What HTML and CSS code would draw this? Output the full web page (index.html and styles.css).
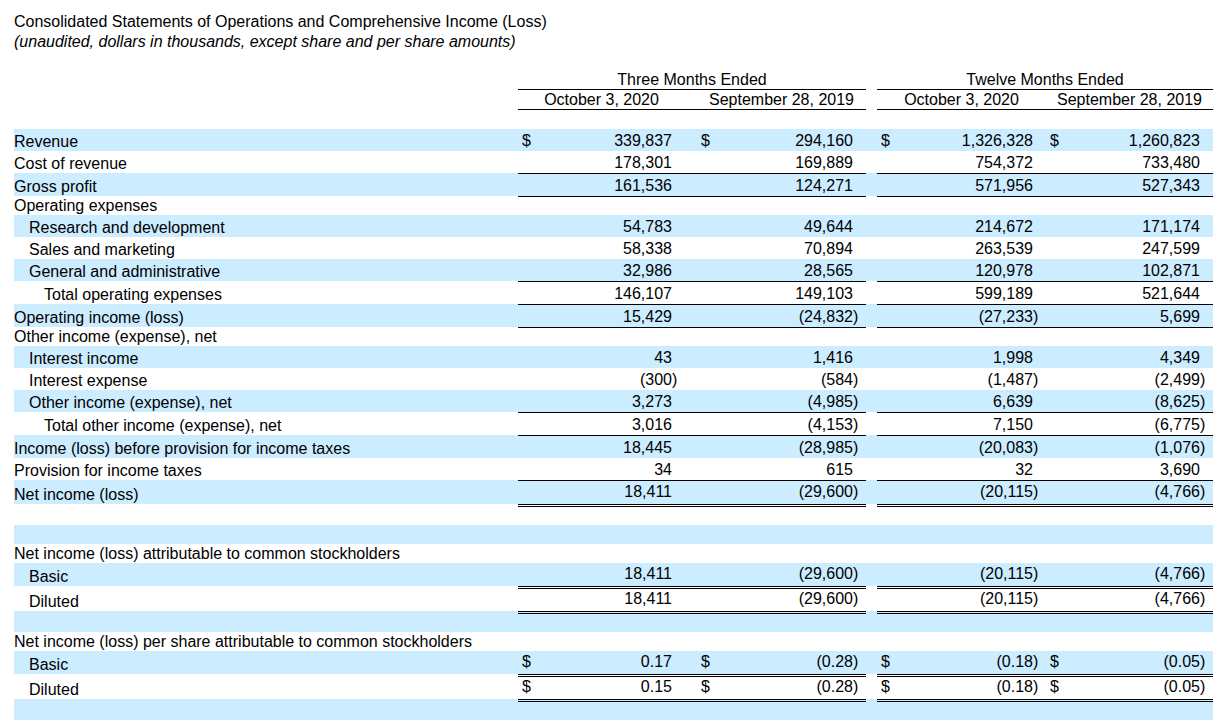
FILE: index.html
```html
<!DOCTYPE html>
<html lang="en">
<head>
<meta charset="utf-8">
<title>Consolidated Statements of Operations and Comprehensive Income (Loss)</title>
<link rel="stylesheet" href="styles.css">
</head>
<body>
<div class="page">
  <div class="title">
    <div>Consolidated Statements of Operations and Comprehensive Income (Loss)</div>
    <div class="sub">(unaudited, dollars in thousands, except share and per share amounts)</div>
  </div>

  <div class="sheet">
    <div class="row head1">
      <div class="lab"></div>
      <div class="grp g-a">Three Months Ended</div>
      <div class="gap"></div>
      <div class="grp g-b">Twelve Months Ended</div>
    </div>
    <div class="row head2">
      <div class="lab"></div>
      <div class="hd">October 3, 2020</div>
      <div class="sp"></div>
      <div class="hd">September 28, 2019</div>
      <div class="gap"></div>
      <div class="hd">October 3, 2020</div>
      <div class="hd">September 28, 2019</div>
    </div>

    <div class="body">
      <div class="row blue h22">
        <div class="lab">Revenue</div>
        <div class="num"><span>$</span><span class="v">339,837</span></div><div class="sp"></div>
        <div class="num"><span>$</span><span class="v">294,160</span></div><div class="gap"></div>
        <div class="num"><span>$</span><span class="v">1,326,328</span></div>
        <div class="num"><span>$</span><span class="v">1,260,823</span></div>
      </div>
      <div class="row h22">
        <div class="lab">Cost of revenue</div>
        <div class="num"><span class="v">178,301</span></div><div class="sp"></div>
        <div class="num"><span class="v">169,889</span></div><div class="gap"></div>
        <div class="num"><span class="v">754,372</span></div>
        <div class="num"><span class="v">733,480</span></div>
      </div>
      <div class="row blue h23 t">
        <div class="lab">Gross profit</div>
        <div class="num"><span class="v">161,536</span></div><div class="sp"></div>
        <div class="num"><span class="v">124,271</span></div><div class="gap"></div>
        <div class="num"><span class="v">571,956</span></div>
        <div class="num"><span class="v">527,343</span></div>
      </div>
      <div class="row h19 t">
        <div class="lab">Operating expenses</div>
        <div class="num"></div><div class="sp"></div>
        <div class="num"></div><div class="gap"></div>
        <div class="num"></div>
        <div class="num"></div>
      </div>
      <div class="row blue h22">
        <div class="lab i1">Research and development</div>
        <div class="num"><span class="v">54,783</span></div><div class="sp"></div>
        <div class="num"><span class="v">49,644</span></div><div class="gap"></div>
        <div class="num"><span class="v">214,672</span></div>
        <div class="num"><span class="v">171,174</span></div>
      </div>
      <div class="row h22">
        <div class="lab i1">Sales and marketing</div>
        <div class="num"><span class="v">58,338</span></div><div class="sp"></div>
        <div class="num"><span class="v">70,894</span></div><div class="gap"></div>
        <div class="num"><span class="v">263,539</span></div>
        <div class="num"><span class="v">247,599</span></div>
      </div>
      <div class="row blue h22">
        <div class="lab i1">General and administrative</div>
        <div class="num"><span class="v">32,986</span></div><div class="sp"></div>
        <div class="num"><span class="v">28,565</span></div><div class="gap"></div>
        <div class="num"><span class="v">120,978</span></div>
        <div class="num"><span class="v">102,871</span></div>
      </div>
      <div class="row h23 t">
        <div class="lab i2">Total operating expenses</div>
        <div class="num"><span class="v">146,107</span></div><div class="sp"></div>
        <div class="num"><span class="v">149,103</span></div><div class="gap"></div>
        <div class="num"><span class="v">599,189</span></div>
        <div class="num"><span class="v">521,644</span></div>
      </div>
      <div class="row blue h23 t">
        <div class="lab">Operating income (loss)</div>
        <div class="num"><span class="v">15,429</span></div><div class="sp"></div>
        <div class="num"><span class="v n">(24,832)</span></div><div class="gap"></div>
        <div class="num"><span class="v n">(27,233)</span></div>
        <div class="num"><span class="v">5,699</span></div>
      </div>
      <div class="row h19 t">
        <div class="lab">Other income (expense), net</div>
        <div class="num"></div><div class="sp"></div>
        <div class="num"></div><div class="gap"></div>
        <div class="num"></div>
        <div class="num"></div>
      </div>
      <div class="row blue h22">
        <div class="lab i1">Interest income</div>
        <div class="num"><span class="v">43</span></div><div class="sp"></div>
        <div class="num"><span class="v">1,416</span></div><div class="gap"></div>
        <div class="num"><span class="v">1,998</span></div>
        <div class="num"><span class="v">4,349</span></div>
      </div>
      <div class="row h22">
        <div class="lab i1">Interest expense</div>
        <div class="num"><span class="v n">(300)</span></div><div class="sp"></div>
        <div class="num"><span class="v n">(584)</span></div><div class="gap"></div>
        <div class="num"><span class="v n">(1,487)</span></div>
        <div class="num"><span class="v n">(2,499)</span></div>
      </div>
      <div class="row blue h22">
        <div class="lab i1">Other income (expense), net</div>
        <div class="num"><span class="v">3,273</span></div><div class="sp"></div>
        <div class="num"><span class="v n">(4,985)</span></div><div class="gap"></div>
        <div class="num"><span class="v">6,639</span></div>
        <div class="num"><span class="v n">(8,625)</span></div>
      </div>
      <div class="row h23 t">
        <div class="lab i2">Total other income (expense), net</div>
        <div class="num"><span class="v">3,016</span></div><div class="sp"></div>
        <div class="num"><span class="v n">(4,153)</span></div><div class="gap"></div>
        <div class="num"><span class="v">7,150</span></div>
        <div class="num"><span class="v n">(6,775)</span></div>
      </div>
      <div class="row blue h23 t">
        <div class="lab">Income (loss) before provision for income taxes</div>
        <div class="num"><span class="v">18,445</span></div><div class="sp"></div>
        <div class="num"><span class="v n">(28,985)</span></div><div class="gap"></div>
        <div class="num"><span class="v n">(20,083)</span></div>
        <div class="num"><span class="v n">(1,076)</span></div>
      </div>
      <div class="row h22">
        <div class="lab">Provision for income taxes</div>
        <div class="num"><span class="v">34</span></div><div class="sp"></div>
        <div class="num"><span class="v">615</span></div><div class="gap"></div>
        <div class="num"><span class="v">32</span></div>
        <div class="num"><span class="v">3,690</span></div>
      </div>
      <div class="row blue h24 t raise">
        <div class="lab">Net income (loss)</div>
        <div class="num"><span class="v">18,411</span></div><div class="sp"></div>
        <div class="num"><span class="v n">(29,600)</span></div><div class="gap"></div>
        <div class="num"><span class="v n">(20,115)</span></div>
        <div class="num"><span class="v n">(4,766)</span></div>
      </div>
      <div class="row h21 dt">
        <div class="lab"></div>
        <div class="num"></div><div class="sp"></div>
        <div class="num"></div><div class="gap"></div>
        <div class="num"></div>
        <div class="num"></div>
      </div>
      <div class="row blue h19"></div>
      <div class="row h19">
        <div class="lab">Net income (loss) attributable to common stockholders</div>
      </div>
      <div class="row blue h23 raise">
        <div class="lab i1">Basic</div>
        <div class="num"><span class="v">18,411</span></div><div class="sp"></div>
        <div class="num"><span class="v n">(29,600)</span></div><div class="gap"></div>
        <div class="num"><span class="v n">(20,115)</span></div>
        <div class="num"><span class="v n">(4,766)</span></div>
      </div>
      <div class="row h25 dt raise">
        <div class="lab i1">Diluted</div>
        <div class="num"><span class="v">18,411</span></div><div class="sp"></div>
        <div class="num"><span class="v n">(29,600)</span></div><div class="gap"></div>
        <div class="num"><span class="v n">(20,115)</span></div>
        <div class="num"><span class="v n">(4,766)</span></div>
      </div>
      <div class="row blue h21 dt">
        <div class="lab"></div>
        <div class="num"></div><div class="sp"></div>
        <div class="num"></div><div class="gap"></div>
        <div class="num"></div>
        <div class="num"></div>
      </div>
      <div class="row h19">
        <div class="lab">Net income (loss) per share attributable to common stockholders</div>
      </div>
      <div class="row blue h23 raise">
        <div class="lab i1">Basic</div>
        <div class="num"><span>$</span><span class="v">0.17</span></div><div class="sp"></div>
        <div class="num"><span>$</span><span class="v n">(0.28)</span></div><div class="gap"></div>
        <div class="num"><span>$</span><span class="v n">(0.18)</span></div>
        <div class="num"><span>$</span><span class="v n">(0.05)</span></div>
      </div>
      <div class="row h25 dt raise">
        <div class="lab i1">Diluted</div>
        <div class="num"><span>$</span><span class="v">0.15</span></div><div class="sp"></div>
        <div class="num"><span>$</span><span class="v n">(0.28)</span></div><div class="gap"></div>
        <div class="num"><span>$</span><span class="v n">(0.18)</span></div>
        <div class="num"><span>$</span><span class="v n">(0.05)</span></div>
      </div>
      <div class="row blue h21 dt">
        <div class="lab"></div>
        <div class="num"></div><div class="sp"></div>
        <div class="num"></div><div class="gap"></div>
        <div class="num"></div>
        <div class="num"></div>
      </div>
    </div>
  </div>
</div>
</body>
</html>
```

FILE: styles.css
```css
* { box-sizing: border-box; }

html, body {
  margin: 0;
  padding: 0;
  background: #ffffff;
}

body {
  font-family: "Liberation Sans", Arial, sans-serif;
  font-size: 16px;
  color: #000000;
}

.page {
  padding: 12px 0 0 14px;
}

.title {
  line-height: 20px;
}

.title .sub {
  font-style: italic;
}

.sheet {
  width: 1199px;
}

.row {
  display: grid;
  grid-template-columns: 504px 167px 12px 169px 11px 169px 167px;
  line-height: 18px;
}

.row > div {
  display: flex;
  align-items: flex-end;
  white-space: nowrap;
}

.head1 {
  height: 38px;
}

.head2 {
  height: 20px;
}

.head1 .grp {
  justify-content: center;
  border-bottom: 1px solid #000;
  padding-bottom: 0.5px;
}

.head1 .g-a {
  grid-column: 2 / 5;
}

.head1 .g-b {
  grid-column: 6 / 8;
}

.head2 .hd,
.head2 .sp {
  border-bottom: 1px solid #000;
}

.head2 .hd {
  justify-content: center;
  padding-bottom: 0.5px;
}

.body {
  margin-top: 19px;
}

.blue {
  background: #ccecff;
}

.h19 { height: 19px; }
.h21 { height: 21px; }
.h22 { height: 22px; }
.h23 { height: 23px; }
.h24 { height: 24px; }
.h25 { height: 25px; }

.lab {
  padding-bottom: 0;
}

.lab.i1 { padding-left: 15px; }
.lab.i2 { padding-left: 30px; }

.num {
  justify-content: space-between;
  padding: 0 13px 1px 4px;
}

.num .v {
  margin-left: auto;
}

.num .v.n {
  margin-right: -0.333em;
}

.raise > .num {
  padding-bottom: 3px;
}

.t > .num,
.t > .sp {
  border-top: 1px solid #000;
}

.dt > .num,
.dt > .sp {
  border-top: 3px double #000;
}
```
